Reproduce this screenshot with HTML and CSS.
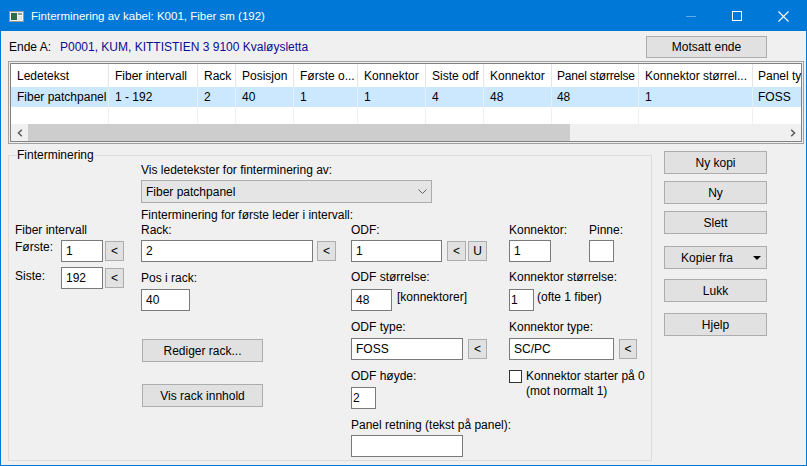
FILE: index.html
```html
<!DOCTYPE html>
<html lang="no">
<head>
<meta charset="utf-8">
<title>Finterminering</title>
<link rel="stylesheet" href="styles.css">
</head>
<body>
<div class="window">
  <div class="titlebar">
    <svg class="app-icon" width="15" height="11" viewBox="0 0 15 11">
      <rect x="0.5" y="0.5" width="14" height="10" fill="#f2f2f2" stroke="#9a9a9a"/>
      <rect x="2" y="2" width="6" height="7" fill="#2e6b4f"/>
      <rect x="9" y="2" width="4" height="2" fill="#8aa39a"/>
      <rect x="9" y="5" width="4" height="4" fill="#dfe6e3"/>
    </svg>
    <span class="title">Finterminering av kabel: K001, Fiber sm (192)</span>
    <div class="controls">
      <span class="ctl"><svg width="10" height="10" viewBox="0 0 10 10"><line x1="0" y1="5.5" x2="10" y2="5.5" stroke="rgba(255,255,255,0.38)" stroke-width="1"/></svg></span>
      <span class="ctl"><svg width="10" height="10" viewBox="0 0 10 10"><rect x="0.5" y="0.5" width="9" height="9" fill="none" stroke="#fff" stroke-width="1"/></svg></span>
      <span class="ctl"><svg width="11" height="11" viewBox="0 0 11 11"><path d="M0.5 0.5 L10.5 10.5 M10.5 0.5 L0.5 10.5" stroke="#fff" stroke-width="1.1" fill="none"/></svg></span>
    </div>
  </div>

  <div class="client">
    <div class="ende-row">
      <span class="ende-label">Ende A:</span>
      <span class="ende-value">P0001, KUM, KITTISTIEN 3 9100 Kvaløysletta</span>
      <div class="btn btn-motsatt">Motsatt ende</div>
    </div>

    <div class="listview">
      <div class="lv-inner">
        <div class="lv-row lv-head">
          <div class="c c1">Ledetekst</div>
          <div class="c c2">Fiber intervall</div>
          <div class="c c3">Rack</div>
          <div class="c c4">Posisjon</div>
          <div class="c c5">Første o...</div>
          <div class="c c6">Konnektor</div>
          <div class="c c7">Siste odf</div>
          <div class="c c8">Konnektor</div>
          <div class="c c9">Panel størrelse</div>
          <div class="c c10">Konnektor størrel...</div>
          <div class="c c11">Panel ty</div>
        </div>
        <div class="lv-row lv-sel">
          <div class="c c1">Fiber patchpanel</div>
          <div class="c c2">1 - 192</div>
          <div class="c c3">2</div>
          <div class="c c4">40</div>
          <div class="c c5">1</div>
          <div class="c c6">1</div>
          <div class="c c7">4</div>
          <div class="c c8">48</div>
          <div class="c c9">48</div>
          <div class="c c10">1</div>
          <div class="c c11">FOSS</div>
        </div>
        <div class="lv-row lv-empty">
          <div class="c c1"></div><div class="c c2"></div><div class="c c3"></div><div class="c c4"></div>
          <div class="c c5"></div><div class="c c6"></div><div class="c c7"></div><div class="c c8"></div>
          <div class="c c9"></div><div class="c c10"></div><div class="c c11"></div>
        </div>
        <div class="hscroll">
          <span class="sarrow"><svg width="6" height="8" viewBox="0 0 6 8"><path d="M4.8 0.8 L1.5 4 L4.8 7.2" stroke="#606060" stroke-width="1.6" fill="none"/></svg></span>
          <div class="track"><div class="thumb"></div></div>
          <span class="sarrow"><svg width="6" height="8" viewBox="0 0 6 8"><path d="M1.2 0.8 L4.5 4 L1.2 7.2" stroke="#606060" stroke-width="1.6" fill="none"/></svg></span>
        </div>
      </div>
    </div>

    <div class="lower">
      <fieldset class="group">
        <legend>Finterminering</legend>
        <div class="gb-head">
          <div class="lbl lbl-vis">Vis ledetekster for finterminering av:</div>
          <div class="select">
            <span>Fiber patchpanel</span>
            <svg width="9" height="5" viewBox="0 0 9 5"><path d="M0.5 0.5 L4.5 4.5 L8.5 0.5" stroke="#606060" stroke-width="1" fill="none"/></svg>
          </div>
          <div class="lbl lbl-first">Finterminering for første leder i intervall:</div>
        </div>

        <div class="gb-cols">
          <div class="col col-a">
            <div class="lbl">Fiber intervall</div>
            <div class="row row-forste">
              <span class="rl">Første:</span>
              <div class="tb w42">1</div>
              <div class="sb ml2">&lt;</div>
            </div>
            <div class="row row-siste">
              <span class="rl rl-siste">Siste:</span>
              <div class="tb w42">192</div>
              <div class="sb ml2">&lt;</div>
            </div>
          </div>

          <div class="col col-b">
            <div class="lbl">Rack:</div>
            <div class="row mt3">
              <div class="tb w172">2</div>
              <div class="sb ml4">&lt;</div>
            </div>
            <div class="lbl mt9">Pos i rack:</div>
            <div class="tb w49 mt4">40</div>
            <div class="btn w121 mt28 ml1">Rediger rack...</div>
            <div class="btn w121 mt22 ml1">Vis rack innhold</div>
          </div>

          <div class="col col-c">
            <div class="lbl">ODF:</div>
            <div class="row mt3">
              <div class="tb w91">1</div>
              <div class="sb ml5">&lt;</div>
              <div class="sb ml2">U</div>
            </div>
            <div class="lbl mt8">ODF størrelse:</div>
            <div class="row row-top mt5">
              <div class="tb w41">48</div>
              <span class="note ml5">[konnektorer]</span>
            </div>
            <div class="lbl mt9">ODF type:</div>
            <div class="row mt4">
              <div class="tb w112">FOSS</div>
              <div class="sb ml5">&lt;</div>
            </div>
            <div class="lbl mt9">ODF høyde:</div>
            <div class="tb w25 narrow mt4">2</div>
            <div class="lbl mt9">Panel retning (tekst på panel):</div>
            <div class="tb w112 mt3"></div>
          </div>

          <div class="col col-d">
            <div class="row">
              <span class="lbl w80">Konnektor:</span>
              <span class="lbl">Pinne:</span>
            </div>
            <div class="row mt3">
              <div class="tb w42">1</div>
              <div class="tb w25 ml38"></div>
            </div>
            <div class="lbl mt8">Konnektor størrelse:</div>
            <div class="row row-top mt5">
              <div class="tb w25 narrow">1</div>
              <span class="note ml3">(ofte 1 fiber)</span>
            </div>
            <div class="lbl mt9">Konnektor type:</div>
            <div class="row mt4">
              <div class="tb w105">SC/PC</div>
              <div class="sb w18 ml5">&lt;</div>
            </div>
            <div class="row row-top mt9">
              <span class="checkbox"></span>
              <span class="cb-label">Konnektor starter på 0<br>(mot normalt 1)</span>
            </div>
          </div>
        </div>
      </fieldset>

      <div class="side">
        <div class="btn sbtn">Ny kopi</div>
        <div class="btn sbtn g7">Ny</div>
        <div class="btn sbtn g7">Slett</div>
        <div class="btn sbtn g12 kopier"><span>Kopier fra</span><span class="tri"></span></div>
        <div class="btn sbtn g10">Lukk</div>
        <div class="btn sbtn g11">Hjelp</div>
      </div>
    </div>
  </div>
</div>
</body>
</html>
```

FILE: styles.css
```css
* { box-sizing: border-box; }

html, body {
  margin: 0;
  padding: 0;
}

body {
  width: 807px;
  height: 466px;
  overflow: hidden;
  font-family: "Liberation Sans", Arial, sans-serif;
  font-size: 12px;
  line-height: 14px;
  color: #000;
  background: #f0f0f0;
}

.window {
  width: 807px;
  height: 466px;
  border: 1px solid #0078d7;
  background: #f0f0f0;
  display: flex;
  flex-direction: column;
}

/* ---------- title bar ---------- */
.titlebar {
  flex: none;
  height: 30px;
  background: #0078d7;
  color: #fff;
  display: flex;
  align-items: center;
  padding-left: 8px;
}

.app-icon {
  flex: none;
  margin-right: 7px;
}

.title {
  flex: 1;
  font-size: 11.5px;
  white-space: nowrap;
}

.controls {
  display: flex;
  height: 30px;
}

.ctl {
  width: 46px;
  height: 30px;
  display: flex;
  align-items: center;
  justify-content: center;
}

/* ---------- client ---------- */
.client {
  flex: 1;
  padding: 0 2px 0 7px;
}

.ende-row {
  display: flex;
  align-items: center;
  height: 22px;
  margin-top: 5px;
}

.ende-label {
  width: 52px;
  padding-left: 1px;
  flex: none;
}

.ende-value {
  flex: 1;
  color: #0c0c96;
  white-space: nowrap;
}

.btn {
  flex: none;
  height: 23px;
  background: #e1e1e1;
  border: 1px solid #adadad;
  display: flex;
  align-items: center;
  justify-content: center;
  white-space: nowrap;
}

.btn-motsatt {
  width: 121px;
  height: 22px;
  margin-right: 37px;
}

/* ---------- list view ---------- */
.listview {
  margin-top: 3px;
  width: 796px;
  height: 83px;
  border: 1px solid #a0a0a0;
  padding: 1px;
}

.lv-inner {
  height: 100%;
  border: 1px solid #828282;
  background: #fff;
  display: flex;
  flex-direction: column;
  overflow: hidden;
}

.lv-row {
  flex: none;
  display: flex;
  white-space: nowrap;
}

.lv-head { height: 23px; }
.lv-sel { height: 20px; background: #cce8ff; }
.lv-empty { height: 17px; }

.c {
  flex: none;
  display: flex;
  align-items: center;
  padding-left: 6px;
  overflow: hidden;
  border-right: 1px solid #e5e5e5;
}

.lv-sel .c { border-right-color: #e3f1fc; }
.lv-empty .c { border-right-color: #f0f0f0; }

.c1 { width: 98px; }
.c2 { width: 89px; }
.c3 { width: 38px; }
.c4 { width: 58px; }
.c5 { width: 64px; }
.c6 { width: 68px; }
.c7 { width: 58px; }
.c8 { width: 68px; }
.c9 { width: 87px; padding-left: 5px; letter-spacing: -0.2px; }
.c10 { width: 114px; }
.c11 { width: 48px; padding-left: 5px; border-right: 0; }

.hscroll {
  flex: none;
  height: 17px;
  display: flex;
  background: #f0f0f0;
}

.sarrow {
  flex: none;
  width: 17px;
  height: 17px;
  display: flex;
  align-items: center;
  justify-content: center;
}

.track {
  flex: 1;
  display: flex;
  align-items: stretch;
}

.thumb {
  width: 542px;
  background: #cdcdcd;
}

/* ---------- lower part ---------- */
.lower {
  display: flex;
  align-items: flex-start;
}

.group {
  margin: 4px 0 0 0;
  padding: 0;
  width: 644px;
  height: 313px;
  min-width: 0;
  border: 1px solid #dcdcdc;
}

.group legend {
  margin-left: 7px;
  padding: 0 1px;
  line-height: 14px;
}

.gb-head {
  padding-left: 132px;
}

.lbl {
  display: block;
  height: 14px;
  line-height: 14px;
  white-space: nowrap;
}

.lbl-vis { margin-top: 1px; }
.lbl-first { margin-top: 5px; }

.select {
  margin-top: 3px;
  width: 291px;
  height: 23px;
  background: #e5e5e5;
  border: 1px solid #acacac;
  display: flex;
  align-items: center;
  justify-content: space-between;
  padding: 0 4px 0 4px;
}

.gb-cols {
  display: grid;
  grid-template-columns: 126px 210px 158px 1fr;
  padding-left: 6px;
  margin-top: 1px;
}

.col {
  display: flex;
  flex-direction: column;
  align-items: flex-start;
}

.row {
  display: flex;
  align-items: center;
}

.row-top { align-items: flex-start; }

.row-forste { margin-top: 3px; align-items: flex-start; }
.row-siste { margin-top: 5px; align-items: flex-start; }
.row-forste .sb, .row-siste .sb { margin-top: 1px; }

.rl {
  width: 46px;
  flex: none;
  white-space: nowrap;
}

.rl-siste { margin-top: 2px; }

.tb {
  flex: none;
  height: 22px;
  background: #fff;
  border: 1px solid #7a7a7a;
  padding: 0 4px;
  display: flex;
  align-items: center;
  white-space: nowrap;
}

.tb.narrow { padding: 0 1px; }

.sb {
  flex: none;
  width: 19px;
  height: 20px;
  background: #e1e1e1;
  border: 1px solid #adadad;
  display: flex;
  align-items: center;
  justify-content: center;
}

.note {
  margin-top: 1px;
  white-space: nowrap;
}

.checkbox {
  flex: none;
  width: 13px;
  height: 13px;
  margin-top: 1px;
  background: #fff;
  border: 1px solid #333;
}

.cb-label {
  margin-left: 4px;
  line-height: 15px;
  white-space: nowrap;
}

/* widths */
.w18 { width: 18px; }
.w25 { width: 25px; }
.w41 { width: 41px; }
.w42 { width: 42px; }
.w49 { width: 49px; }
.w80 { width: 80px; }
.w91 { width: 91px; }
.w105 { width: 105px; }
.w112 { width: 112px; }
.w121 { width: 121px; }
.w172 { width: 172px; }

/* spacing */
.ml1 { margin-left: 1px; }
.ml2 { margin-left: 2px; }
.ml3 { margin-left: 3px; }
.ml4 { margin-left: 4px; }
.ml5 { margin-left: 5px; }
.ml38 { margin-left: 38px; }
.mt3 { margin-top: 3px; }
.mt4 { margin-top: 4px; }
.mt5 { margin-top: 5px; }
.mt8 { margin-top: 8px; }
.mt9 { margin-top: 9px; }
.mt22 { margin-top: 22px; }
.mt28 { margin-top: 28px; }

/* side buttons */
.side {
  margin: 7px 0 0 12px;
  width: 103px;
  display: flex;
  flex-direction: column;
}

.sbtn { width: 103px; }
.g7 { margin-top: 7px; }
.g10 { margin-top: 10px; }
.g11 { margin-top: 11px; }
.g12 { margin-top: 12px; }

.kopier {
  justify-content: space-between;
  padding: 0 5px 0 16px;
}

.tri {
  width: 0;
  height: 0;
  border-left: 4px solid transparent;
  border-right: 4px solid transparent;
  border-top: 4px solid #000;
}
```
